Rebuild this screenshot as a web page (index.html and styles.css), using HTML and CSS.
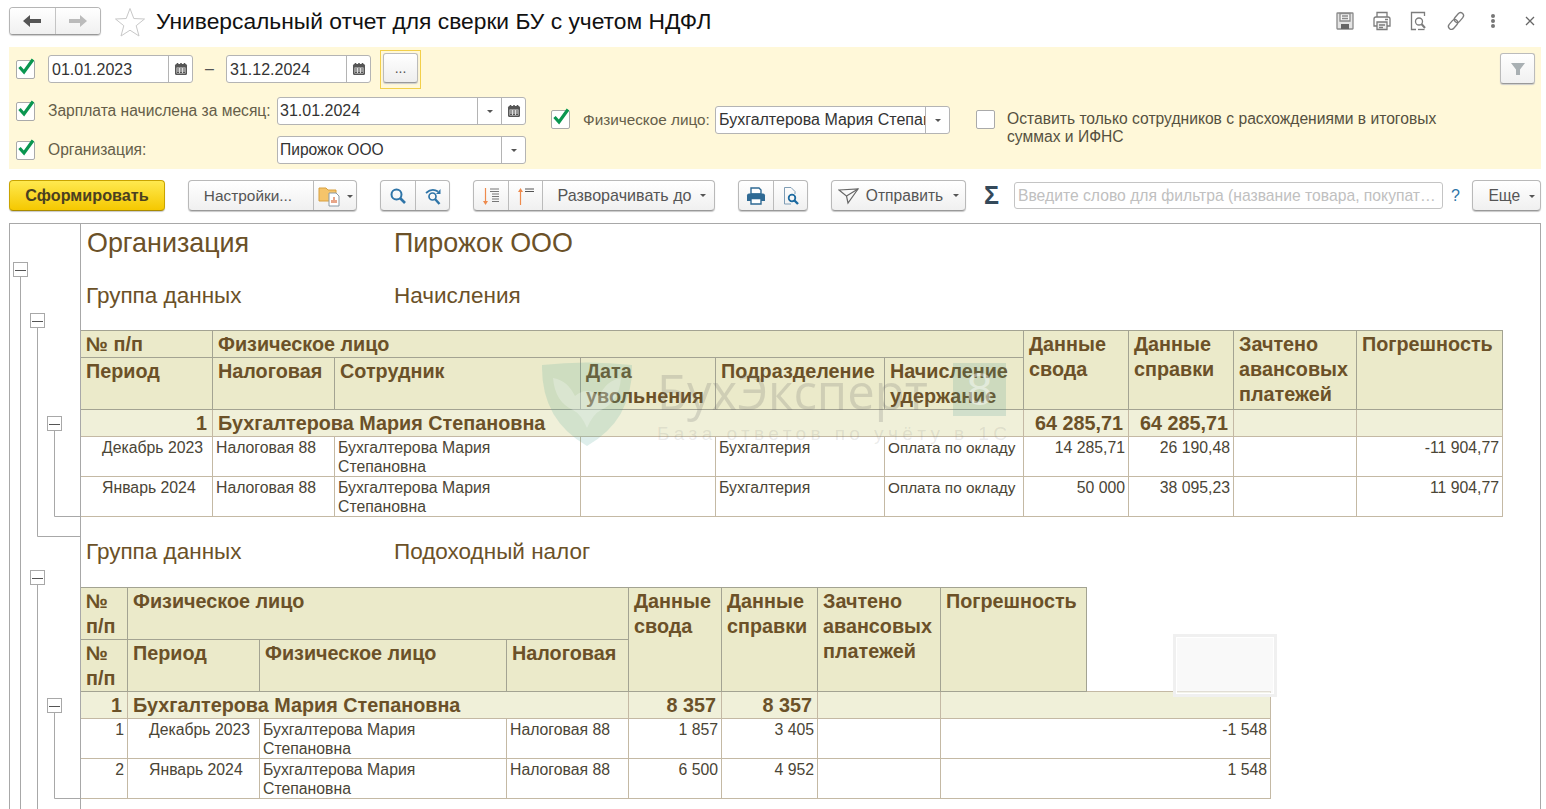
FILE: index.html
```html
<!DOCTYPE html>
<html lang="ru">
<head>
    <meta charset="UTF-8">
    <title>Универсальный отчет для сверки БУ с учетом НДФЛ</title>
    <link rel="stylesheet" href="styles.css">
</head>
<body>
    <svg class="sprite" width="0" height="0">
        <symbol id="cal" viewBox="0 0 14 14">
            <path d="M1 3.500Q1 2 2.500 2H11.500Q13 2 13 3.500V11.500Q13 13 11.500 13H2.500Q1 13 1 11.500Z" fill="#555"/>
            <path d="M3.500 1V3M7 1V3M10.500 1V3" stroke="#555" stroke-width="1.600"/>
            <path d="M2.500 5.500H11.500V11.500H2.500Z" fill="#ddd"/>
            <path d="M3 6.500H5V7.500H3ZM6 6.500H8V7.500H6ZM9 6.500H11V7.500H9ZM3 8.500H5V9.500H3ZM6 8.500H8V9.500H6ZM9 8.500H11V9.500H9ZM3 10H5V11H3ZM6 10H8V11H6ZM9 10H11V11H9Z" fill="#555"/>
        </symbol>
        <symbol id="check" viewBox="0 0 20 20">
            <path d="M3.500 10L8 15L17 2.500" fill="none" stroke="#0a9650" stroke-width="3.200"/>
        </symbol>
        <symbol id="print" viewBox="0 0 20 20">
            <path d="M5 2H13L15 4V8H5Z" fill="#fff" stroke="#2f6a94" stroke-width="1.400"/>
            <path d="M3 7.500H17Q19 7.500 19 9.500V15H1V9.500Q1 7.500 3 7.500Z" fill="#2f6a94"/>
            <path d="M5 12.500H15V18H5Z" fill="#fff" stroke="#2f6a94" stroke-width="1.400"/>
        </symbol>
    </svg>

    <div class="titlebar">
        <div class="nav-group">
            <button class="nav-btn">
                <svg width="18" height="14" viewBox="0 0 18 14"><path d="M0 7L7 1V5H18V9H7V13Z" fill="#555"/></svg>
            </button>
            <button class="nav-btn">
                <svg width="18" height="14" viewBox="0 0 18 14"><path d="M18 7L11 1V5H0V9H11V13Z" fill="#bbb"/></svg>
            </button>
        </div>
        <svg class="star" width="32" height="30" viewBox="0 0 32 30"><path d="M16 1.500L19.800 11.500L30.500 12L22.200 18.700L25 29L16 23.200L7 29L9.800 18.700L1.500 12L12.200 11.500Z" fill="#fff" stroke="#c8c8c8"/></svg>
        <h1 class="title">Универсальный отчет для сверки БУ с учетом НДФЛ</h1>
        <div class="window-icons">
            <span class="window-icon">
                <svg width="20" height="20" viewBox="0 0 20 20" fill="none" stroke="#8a8a8a" stroke-width="1.300"><path d="M2.500 2H17.500Q18 2 18 2.500V17.500Q18 18 17.500 18H2.500Q2 18 2 17.500V2.500Q2 2 2.500 2Z" fill="#e4e4e4"/><path d="M5 2.500H15V10H5Z" fill="#f5f5f5"/><path d="M7 5H13M7 7.500H13"/><path d="M6 13H14V18H6Z" fill="#666" stroke="none"/></svg>
            </span>
            <span class="window-icon">
                <svg width="20" height="20" viewBox="0 0 20 20" fill="none" stroke="#7c7c7c" stroke-width="1.300"><path d="M5 6V1.500H15V6"/><path d="M5 15H2V8Q2 6 4 6H16Q18 6 18 8V15H15"/><path d="M5 11H15V18.500H5Z" fill="#eee"/><path d="M7 14H13M7 16.500H11M13 8.500H16"/></svg>
            </span>
            <span class="window-icon">
                <svg width="20" height="20" viewBox="0 0 20 20" fill="none" stroke="#7c7c7c" stroke-width="1.300"><path d="M7 18.500H2.500V1.500H15.500V5"/><circle cx="10" cy="10.500" r="3.500"/><path d="M12.500 13L16 17" stroke-width="2"/><path d="M15.500 18.500H9"/></svg>
            </span>
            <span class="window-icon">
                <svg width="22" height="22" viewBox="0 0 22 22" fill="none" stroke="#7c7c7c" stroke-width="1.300"><g transform="rotate(-50 11 11)"><rect x="1" y="8" width="11" height="6" rx="3"/><rect x="10" y="8" width="11" height="6" rx="3"/></g></svg>
            </span>
            <span class="window-icon">
                <svg width="6" height="16" viewBox="0 0 6 16" fill="#777"><circle cx="3" cy="3" r="2"/><circle cx="3" cy="8" r="2"/><circle cx="3" cy="13" r="2"/></svg>
            </span>
            <span class="window-icon">
                <svg width="10" height="10" viewBox="0 0 10 10" fill="none" stroke="#666" stroke-width="1.300"><path d="M1 1L9 9M9 1L1 9"/></svg>
            </span>
        </div>
    </div>

    <div class="filters">
        <div class="filter-left">
            <div class="filter-row">
                <span class="cb checked"><svg width="20" height="20"><use href="#check"/></svg></span>
                <div class="field w-date"><span class="field-text">01.01.2023</span><span class="field-btn cal"><svg width="14" height="14"><use href="#cal"/></svg></span></div>
                <span class="dash">–</span>
                <div class="field w-date"><span class="field-text">31.12.2024</span><span class="field-btn cal"><svg width="14" height="14"><use href="#cal"/></svg></span></div>
                <span class="focus-ring"><button class="dots-btn">...</button></span>
            </div>
            <div class="filter-row row-second">
                <span class="cb checked"><svg width="20" height="20"><use href="#check"/></svg></span>
                <span class="filter-label">Зарплата начислена за месяц:</span>
                <div class="field w-wide"><span class="field-text">31.01.2024</span><span class="field-btn"><i class="caret"></i></span><span class="field-btn cal"><svg width="14" height="14"><use href="#cal"/></svg></span></div>
            </div>
            <div class="filter-row row-third">
                <span class="cb checked"><svg width="20" height="20"><use href="#check"/></svg></span>
                <span class="filter-label">Организация:</span>
                <div class="field w-wide"><span class="field-text name">Пирожок ООО</span><span class="field-btn"><i class="caret"></i></span></div>
            </div>
        </div>
        <div class="filter-mid">
            <span class="cb checked"><svg width="20" height="20"><use href="#check"/></svg></span>
            <span class="person-label">Физическое лицо:</span>
            <div class="field w-person"><span class="field-text">Бухгалтерова Мария Степановна</span><span class="field-btn"><i class="caret"></i></span></div>
            <span class="cb cb-only"></span>
            <span class="only-diff">Оставить только сотрудников с расхождениями в итоговых суммах и ИФНС</span>
        </div>
        <button class="filter-btn">
            <svg width="16" height="16" viewBox="0 0 16 16"><path d="M1 2H15L10 8.500V14L6 14V8.500Z" fill="#a9b0b3"/></svg>
        </button>
    </div>

    <div class="toolbar">
        <button class="btn btn-primary">Сформировать</button>
        <div class="btn-group">
            <button class="btn-part settings">Настройки...</button>
            <button class="btn-part variants">
                <svg width="24" height="22" viewBox="0 0 24 22"><path d="M1 3H8L10 5H18V16H1Z" fill="#f5c46a" stroke="#d8a040"/><path d="M11 8H18L21 11V21H11Z" fill="#fff" stroke="#8a9aa5"/><path d="M14 18V15M16 18V12M18 18V15" stroke="#d86a3a" stroke-width="1.200"/></svg>
                <i class="caret"></i>
            </button>
        </div>
        <div class="btn-group">
            <button class="btn-part icon-part">
                <svg width="18" height="18" viewBox="0 0 18 18" fill="none" stroke="#2f75a8" stroke-width="2"><circle cx="7.500" cy="7.500" r="5"/><path d="M11 11L16 16" stroke-width="2.600"/></svg>
            </button>
            <button class="btn-part icon-part">
                <svg width="18" height="18" viewBox="0 0 18 18" fill="none" stroke="#2f75a8" stroke-width="1.700"><circle cx="8.500" cy="9.500" r="3.500"/><path d="M11 12L15.500 17" stroke-width="2.400"/><path d="M2 6Q8 0.500 14 4.500"/><path d="M16.500 2V7H12" fill="#2f75a8" stroke="none"/></svg>
            </button>
        </div>
        <div class="btn-group">
            <button class="btn-part icon-part">
                <svg width="20" height="20" viewBox="0 0 20 20"><path d="M4.500 2V17" stroke="#ee8a4c" stroke-width="1.200"/><path d="M2 15H7L4.500 19Z" fill="#ee8a4c"/><path d="M9 3H18M9 5.500H18M11 8H18M11 10.500H18M11 13H18M11 15.500H18" stroke="#777"/></svg>
            </button>
            <button class="btn-part icon-part">
                <svg width="20" height="20" viewBox="0 0 20 20"><path d="M4.500 5V19" stroke="#ee8a4c" stroke-width="1.200"/><path d="M2 6H7L4.500 2Z" fill="#ee8a4c"/><path d="M9 3H18M9 5.500H18" stroke="#555"/></svg>
            </button>
            <button class="btn-part expand">Разворачивать до <i class="caret"></i></button>
        </div>
        <div class="btn-group">
            <button class="btn-part icon-part">
                <svg width="20" height="20"><use href="#print"/></svg>
            </button>
            <button class="btn-part icon-part">
                <svg width="18" height="20" viewBox="0 0 18 20" fill="none"><path d="M9 18H2.500V1.500H9L13 5.500V8" stroke="#7f9db5"/><circle cx="10" cy="12" r="3.300" stroke="#1c6aa0" stroke-width="1.800"/><path d="M12.500 14.500L16 18" stroke="#1c6aa0" stroke-width="2.400"/></svg>
            </button>
        </div>
        <button class="btn send">
            <svg width="22" height="18" viewBox="0 0 22 18" fill="none" stroke="#666" stroke-width="1.200"><path d="M1 3L20 2L10 16L8.500 9Z"/><path d="M8.500 9L20 2"/></svg>
            Отправить <i class="caret"></i>
        </button>
        <span class="sigma">Σ</span>
        <div class="search-box"><span class="search-text">Введите слово для фильтра (название товара, покупателя, договора)</span></div>
        <span class="help">?</span>
        <button class="btn more">Еще <i class="caret"></i></button>
    </div>

    <div class="report">
        <div class="report-title"><span class="report-label">Организация</span><span>Пирожок ООО</span></div>

        <div class="group-title first"><span class="report-label">Группа данных</span><span>Начисления</span></div>
        <table class="sheet sheet-one">
            <colgroup>
                <col class="c132"><col class="c122"><col class="c246"><col class="c135"><col class="c169"><col class="c139"><col class="c105"><col class="c105"><col class="c123"><col class="c146">
            </colgroup>
            <tr class="head-row short">
                <th>№ п/п</th>
                <th colspan="5">Физическое лицо</th>
                <th rowspan="2">Данные свода</th>
                <th rowspan="2">Данные справки</th>
                <th rowspan="2">Зачтено авансовых платежей</th>
                <th rowspan="2">Погрешность</th>
            </tr>
            <tr class="head-row tall">
                <th>Период</th>
                <th>Налоговая</th>
                <th>Сотрудник</th>
                <th>Дата увольнения</th>
                <th>Подразделение</th>
                <th>Начисление удержание</th>
            </tr>
            <tr class="group-row">
                <td class="num">1</td>
                <td colspan="5">Бухгалтерова Мария Степановна</td>
                <td class="num">64 285,71</td>
                <td class="num">64 285,71</td>
                <td></td>
                <td></td>
            </tr>
            <tr class="data-row">
                <td class="period">Декабрь 2023</td>
                <td>Налоговая 88</td>
                <td>Бухгалтерова Мария Степановна</td>
                <td></td>
                <td>Бухгалтерия</td>
                <td class="nowrap">Оплата по окладу</td>
                <td class="num">14 285,71</td>
                <td class="num">26 190,48</td>
                <td></td>
                <td class="num">-11 904,77</td>
            </tr>
            <tr class="data-row">
                <td class="period">Январь 2024</td>
                <td>Налоговая 88</td>
                <td>Бухгалтерова Мария Степановна</td>
                <td></td>
                <td>Бухгалтерия</td>
                <td class="nowrap">Оплата по окладу</td>
                <td class="num">50 000</td>
                <td class="num">38 095,23</td>
                <td></td>
                <td class="num">11 904,77</td>
            </tr>
        </table>

        <div class="group-title"><span class="report-label">Группа данных</span><span>Подоходный налог</span></div>
        <table class="sheet sheet-two">
            <colgroup>
                <col class="c47"><col class="c132"><col class="c247"><col class="c122"><col class="c93"><col class="c96"><col class="c123"><col class="c146"><col class="c184">
            </colgroup>
            <tr class="head-row tall">
                <th>№ п/п</th>
                <th colspan="3">Физическое лицо</th>
                <th rowspan="2">Данные свода</th>
                <th rowspan="2">Данные справки</th>
                <th rowspan="2">Зачтено авансовых платежей</th>
                <th rowspan="2">Погрешность</th>
                <td rowspan="2" class="blank"></td>
            </tr>
            <tr class="head-row tall">
                <th>№ п/п</th>
                <th>Период</th>
                <th>Физическое лицо</th>
                <th>Налоговая</th>
            </tr>
            <tr class="group-row">
                <td class="num">1</td>
                <td colspan="3">Бухгалтерова Мария Степановна</td>
                <td class="num">8 357</td>
                <td class="num">8 357</td>
                <td></td>
                <td colspan="2"></td>
            </tr>
            <tr class="data-row">
                <td class="num">1</td>
                <td class="period">Декабрь 2023</td>
                <td>Бухгалтерова Мария Степановна</td>
                <td>Налоговая 88</td>
                <td class="num">1 857</td>
                <td class="num">3 405</td>
                <td></td>
                <td colspan="2" class="num">-1 548</td>
            </tr>
            <tr class="data-row">
                <td class="num">2</td>
                <td class="period">Январь 2024</td>
                <td>Бухгалтерова Мария Степановна</td>
                <td>Налоговая 88</td>
                <td class="num">6 500</td>
                <td class="num">4 952</td>
                <td></td>
                <td colspan="2" class="num">1 548</td>
            </tr>
        </table>

        <!-- outline tree, drawn in page coordinates -->
        <svg class="tree" width="1530" height="585" viewBox="10 224 1530 585" fill="none" stroke="#a8a8a8">
            <path d="M80.500 224V809"/>
            <path d="M20.500 276V809"/>
            <path d="M37.500 327V536.500H80"/>
            <path d="M54.500 430V516.500H80"/>
            <path d="M37.500 584V809"/>
            <path d="M54.500 712V798.500H80"/>
            <g fill="#fff">
                <rect x="13.500" y="262.500" width="14" height="14"/>
                <rect x="30.500" y="313.500" width="14" height="14"/>
                <rect x="47.500" y="416.500" width="14" height="14"/>
                <rect x="30.500" y="570.500" width="14" height="14"/>
                <rect x="47.500" y="698.500" width="14" height="14"/>
            </g>
            <path d="M15 270.500H26M32 321.500H43M49 424.500H60M32 578.500H43M49 706.500H60" stroke="#555"/>
        </svg>

        <div class="watermark">
            <svg class="wm-shield" width="92" height="84" viewBox="0 0 92 84">
                <path d="M1 3Q46 -2 91 3Q92 58 46 84Q0 58 1 3Z" fill="#5aa89c" fill-opacity="0.2"/>
                <path d="M12 16Q26 18 34 34Q46 24 58 34Q66 18 80 16Q78 40 60 48Q52 52 46 66Q40 52 32 48Q14 40 12 16Z" fill="#fff" fill-opacity="0.25"/>
            </svg>
            <div class="wm-text">
                <div class="wm-name">БухЭксперт</div>
                <div class="wm-sub">База ответов по учёту в 1С</div>
            </div>
            <div class="wm-badge">8</div>
        </div>
        <div class="ghost-box"></div>
    </div>
</body>
</html>
```

FILE: styles.css
```css
* {
    box-sizing: border-box;
}

html, body {
    margin: 0;
    height: 100%;
}

body {
    height: 100vh;
    display: flex;
    flex-direction: column;
    overflow: hidden;
    background-color: #fff;
    color: #333;
    font-family: "Liberation Sans", Arial, sans-serif;
    font-size: 16px;
}

button {
    font-family: inherit;
    font-size: 15.600px;
    padding: 0;
    cursor: pointer;
}

.sprite {
    position: absolute;
}

/* title bar */
.titlebar {
    height: 47px;
    flex: none;
    display: flex;
    align-items: center;
    padding: 0 0 6px 9px;
}

.nav-group {
    display: flex;
    width: 92px;
    height: 28px;
    border: 1px solid #b5b5b5;
    border-bottom-color: #999;
    border-radius: 4px;
    box-shadow: 0 1px 1px #ccc;
    overflow: hidden;
}

.nav-btn {
    flex: 1;
    display: flex;
    align-items: center;
    justify-content: center;
    border: 0;
    background: linear-gradient(#fff, #f0f0f0);
}

.nav-btn + .nav-btn {
    border-left: 1px solid #c4c4c4;
}

.star {
    margin-left: 13px;
    margin-top: 2px;
}

.title {
    margin: 2px 0 0 10px;
    font-size: 22.800px;
    font-weight: 400;
    color: #111;
    white-space: nowrap;
}

.window-icons {
    display: flex;
    align-items: center;
    margin-left: auto;
    margin-right: -2px;
}

.window-icon {
    width: 37px;
    height: 24px;
    display: flex;
    align-items: center;
    justify-content: center;
}

/* filter panel */
.filters {
    height: 122px;
    flex: none;
    display: flex;
    margin: 0 5px 0 9px;
    padding-left: 7px;
    background-color: #fff8d9;
}

.filter-left {
    padding-top: 8px;
}

.filter-row {
    display: flex;
    align-items: center;
    height: 28px;
}

.row-second {
    margin-top: 14px;
}

.row-third {
    margin-top: 11px;
}

.cb {
    position: relative;
    flex: none;
    width: 19px;
    height: 19px;
    margin-right: 13px;
    background-color: #fff;
    border: 1px solid #aaa;
    border-radius: 2px;
}

.cb svg {
    position: absolute;
    left: -1px;
    top: -4px;
}

.cb-only {
    margin-left: 26px;
    margin-right: 12px;
}

.field {
    flex: none;
    display: flex;
    height: 28px;
    background-color: #fff;
    border: 1px solid #b4b4b4;
    border-radius: 3px;
    overflow: hidden;
}

.w-date {
    width: 145px;
}

.w-wide {
    width: 249px;
}

.w-person {
    width: 235px;
}

.field-text {
    flex: 1;
    min-width: 0;
    padding-left: 3px;
    line-height: 26px;
    color: #333;
    white-space: nowrap;
    overflow: hidden;
}

.w-date .field-text {
    line-height: 28px;
}

.w-wide .field-text {
    padding-left: 2px;
}

.field-text.name {
    font-size: 15.600px;
}

.field-btn {
    flex: none;
    width: 24px;
    display: flex;
    align-items: center;
    justify-content: center;
    border-left: 1px solid #b4b4b4;
}

.caret {
    display: inline-block;
    width: 0;
    height: 0;
    border-left: 3px solid transparent;
    border-right: 3px solid transparent;
    border-top: 3px solid #555;
    vertical-align: middle;
}

.dash {
    width: 33px;
    text-align: center;
    color: #555;
}

.focus-ring {
    flex: none;
    display: flex;
    align-items: center;
    justify-content: center;
    width: 41px;
    height: 39px;
    margin-left: 9px;
    border: 1px solid #f2cf4a;
}

.dots-btn {
    width: 35px;
    height: 30px;
    margin-bottom: 2px;
    border: 1px solid #bbb;
    border-bottom-color: #999;
    border-radius: 3px;
    background: linear-gradient(#fff, #eee);
    color: #555;
    font-size: 14px;
    box-shadow: 0 1px 1px #ccc;
}

.filter-label {
    width: 229px;
    flex: none;
    font-size: 15.600px;
    color: #655e49;
    white-space: nowrap;
}

.filter-mid {
    display: flex;
    align-items: flex-start;
    margin-left: 25px;
    padding-top: 59px;
}

.filter-mid .cb {
    margin-top: 4px;
}

.person-label {
    width: 132px;
    flex: none;
    font-size: 15.300px;
    line-height: 28px;
    color: #655e49;
    white-space: nowrap;
}

.only-diff {
    width: 445px;
    font-size: 15.650px;
    line-height: 18px;
    margin-top: 4px;
    color: #555040;
}

.filter-btn {
    width: 35px;
    height: 31px;
    margin: 6px 6px 0 auto;
    display: flex;
    align-items: center;
    justify-content: center;
    border: 1px solid #bbb;
    border-bottom-color: #999;
    border-radius: 3px;
    background: linear-gradient(#fff, #f0f0f0);
    box-shadow: 0 1px 1px #ccc;
}

/* command bar */
.toolbar {
    height: 31px;
    flex: none;
    display: flex;
    align-items: center;
    gap: 23px;
    margin: 11px 5px 12px 9px;
}

.btn,
.btn-group {
    height: 31px;
    border: 1px solid #b9b9b9;
    border-bottom-color: #999;
    border-radius: 4px;
    background: linear-gradient(#fff, #f0f0f0);
    box-shadow: 0 1px 1px #c8c8c8;
    color: #555;
    white-space: nowrap;
}

.btn-group {
    display: flex;
    overflow: hidden;
}

.btn-primary {
    width: 156px;
    border-color: #c9a400;
    border-bottom-color: #a88a00;
    background: linear-gradient(#ffe94f, #f5c800);
    color: #4a4020;
    font-size: 16.200px;
    font-weight: 700;
}

.btn-part {
    display: flex;
    align-items: center;
    justify-content: center;
    height: 100%;
    border: 0;
    background: transparent;
    color: #555;
    white-space: nowrap;
}

.btn-part + .btn-part {
    border-left: 1px solid #bbb;
}

.settings {
    width: 124px;
    padding-right: 6px;
    font-size: 15.400px;
}

.variants {
    width: 43px;
    gap: 5px;
    padding-top: 1px;
}

.icon-part {
    width: 34px;
}

.expand {
    width: 172px;
    gap: 8px;
    padding-left: 6px;
    font-size: 16.100px;
}

.send {
    width: 135px;
    display: flex;
    align-items: center;
    justify-content: center;
    gap: 6px;
}

.sigma {
    margin-left: -5px;
    width: 16px;
    font-size: 25px;
    font-weight: 700;
    line-height: 31px;
    color: #34495a;
}

.search-box {
    width: 429px;
    height: 27px;
    margin-left: -9px;
    padding: 0 3px;
    border: 1px solid #c4c4c4;
    border-radius: 3px;
    font-size: 15.700px;
    line-height: 26px;
    color: #c0c0c0;
    overflow: hidden;
}

.search-text {
    display: block;
    white-space: nowrap;
    overflow: hidden;
    text-overflow: ellipsis;
}

.help {
    margin-left: -15px;
    width: 8px;
    color: #2f75a8;
}

.more {
    width: 69px;
    margin-left: -10px;
    padding-left: 10px;
}

.more .caret,
.send .caret {
    margin-left: 4px;
}

/* report sheet */
.report {
    position: relative;
    flex: 1;
    min-height: 0;
    margin: 0 5px 0 9px;
    padding-left: 70px;
    border: 1px solid #a8a8a8;
    border-bottom: 0;
    overflow: hidden;
    color: #6b5128;
}

.report-title,
.group-title {
    display: flex;
    padding-left: 7px;
    white-space: nowrap;
}

.report-title {
    height: 40px;
    line-height: 38px;
    font-size: 26.900px;
}

.group-title {
    height: 30px;
    line-height: 30px;
    font-size: 22.500px;
    padding-left: 6px;
    margin-top: 20px;
}

.group-title.first {
    margin-top: 16px;
    line-height: 32px;
}

.report-label {
    width: 307px;
    flex: none;
}

.group-title .report-label {
    width: 308px;
}

.sheet {
    margin-top: 20px;
    border-collapse: collapse;
    table-layout: fixed;
    color: #4a4536;
}

.sheet-one {
    width: 1422px;
}

.sheet-two {
    width: 1190px;
}

.c47 { width: 47px; }
.c93 { width: 93px; }
.c96 { width: 96px; }
.c105 { width: 105px; }
.c122 { width: 122px; }
.c123 { width: 123px; }
.c132 { width: 132px; }
.c135 { width: 135px; }
.c139 { width: 139px; }
.c146 { width: 146px; }
.c169 { width: 169px; }
.c184 { width: 184px; }
.c246 { width: 246px; }
.c247 { width: 247px; }

.sheet th {
    padding: 1px 3px 0 5px;
    background-color: #ebeaca;
    border: 1px solid #a3a392;
    color: #6b5128;
    font-size: 19.800px;
    line-height: 25px;
    font-weight: 700;
    text-align: left;
    vertical-align: top;
}

.sheet .blank {
    border: 0;
    padding: 0;
}

.short {
    height: 27px;
}

.tall {
    height: 52px;
}

.group-row {
    height: 27px;
}

.group-row td {
    padding: 0 3px 0 5px;
    background-color: #f0f0d9;
    border: 1px solid #c4b9a4;
    color: #6b5128;
    font-size: 19.800px;
    line-height: 25px;
    font-weight: 700;
}

.group-row .num {
    padding-right: 5px;
}

.data-row {
    height: 40px;
}

.data-row td {
    padding: 1px 3px 0;
    border: 1px solid #c4b9a4;
    font-size: 15.800px;
    line-height: 19px;
    vertical-align: top;
}

.num {
    text-align: right;
    white-space: nowrap;
}

.data-row .nowrap {
    white-space: nowrap;
    font-size: 15.300px;
}

.data-row .period {
    padding-left: 21px;
    white-space: nowrap;
}

.tree {
    position: absolute;
    left: 0;
    top: 0;
    pointer-events: none;
}

/* vendor watermark lying over the sheet */
.watermark {
    position: absolute;
    left: 531px;
    top: 138px;
    width: 465px;
    height: 84px;
    display: flex;
    pointer-events: none;
}

.wm-text {
    margin-left: 24px;
    width: 295px;
}

.wm-name {
    font-family: "Open Sans", "Liberation Sans", sans-serif;
    font-size: 49px;
    line-height: 58px;
    color: rgba(110, 110, 110, 0.22);
    white-space: nowrap;
}

.wm-sub {
    font-size: 19px;
    line-height: 22px;
    margin-top: 3px;
    letter-spacing: 4.400px;
    color: rgba(110, 110, 110, 0.14);
    white-space: nowrap;
}

.wm-badge {
    position: absolute;
    right: 0;
    top: 1px;
    width: 53px;
    height: 53px;
    background-color: rgba(70, 150, 140, 0.18);
    color: rgba(255, 255, 255, 0.45);
    font-size: 46px;
    line-height: 53px;
    text-align: center;
}

.ghost-box {
    position: absolute;
    left: 1163px;
    top: 410px;
    width: 104px;
    height: 63px;
    border: 3px solid #f0f0f0;
    outline: 1px solid #fff;
    outline-offset: -4px;
    background-color: rgba(245, 245, 245, 0.6);
    pointer-events: none;
}
```
